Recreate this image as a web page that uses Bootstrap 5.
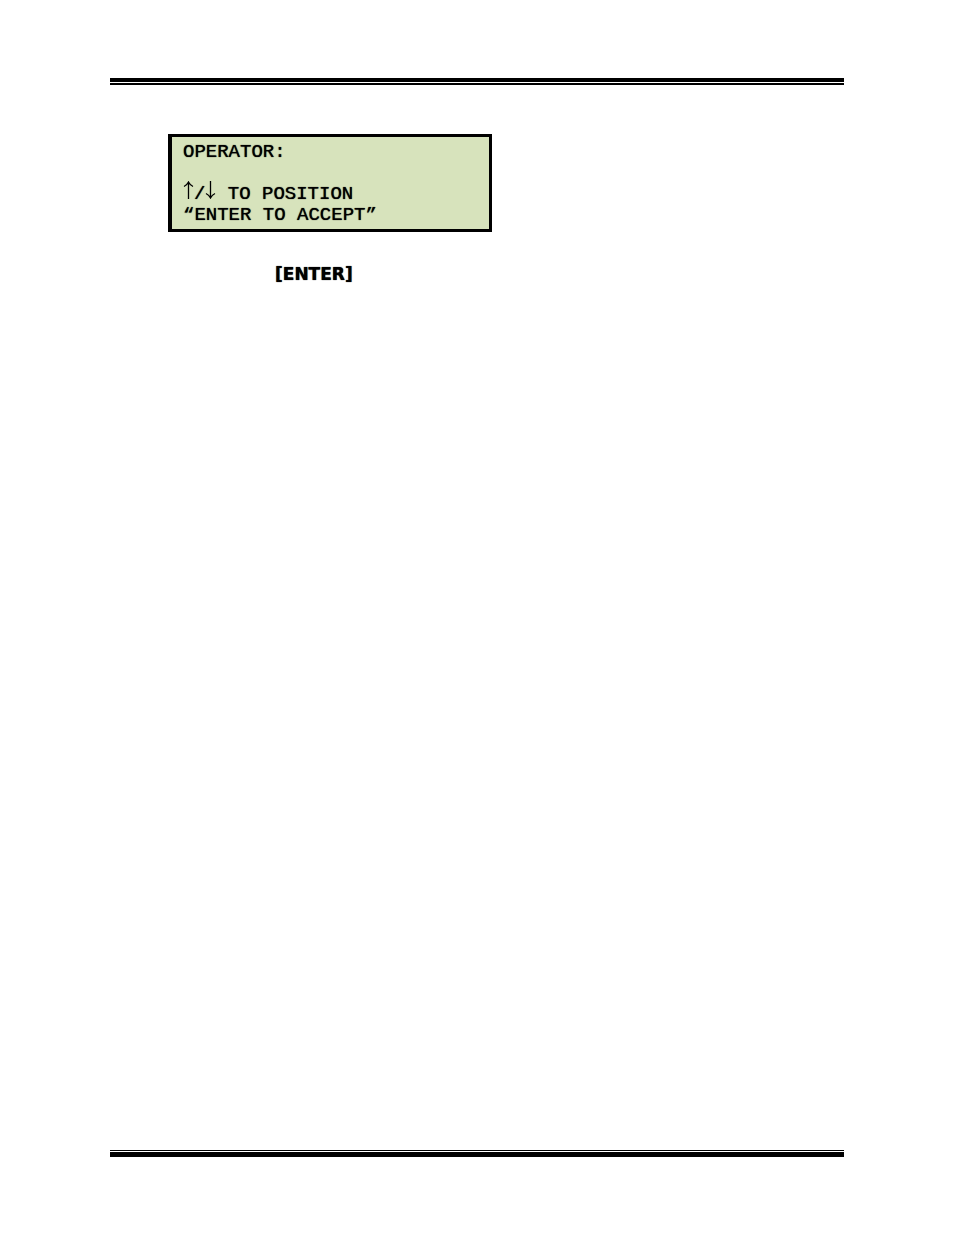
<!DOCTYPE html>
<html lang="en">
<head>
<meta charset="utf-8">
<meta name="viewport" content="width=device-width, initial-scale=1">
<title>Operator</title>
<link href="https://cdn.jsdelivr.net/npm/bootstrap@5.3.0/dist/css/bootstrap.min.css" rel="stylesheet">
<style>
body { background: #fff; color: #000; }
.sheet { padding: 78px 110px; }
.rule-top { height: 7px; border-top: 4px solid #000; border-bottom: 2px solid #000; }
.rule-bottom { height: 7px; border-top: 1px solid #000; border-bottom: 5px solid #000; }
.content { padding: 49px 58px; }
.lcd {
  width: 324px; max-width: 100%;
  padding: 5px 11px 3px;
  border: 3px solid #000; border-left-width: 4px;
  background: #d7e3bc;
  font: 19px/21px "Liberation Mono", monospace;
  text-shadow: 0 0 1px #000;
}
.lcd-line { height: 21px; white-space: pre; }
.arrow {
  width: 11px; height: 18px; margin-top: -4px;
  vertical-align: baseline;
  fill: none; stroke: #000; stroke-width: 1.3;
}
.key-row { padding: 32px 107px; font: bold 17px/21px "DejaVu Sans", sans-serif; text-shadow: 0 0 1px #000; }
</style>
</head>
<body>
<div class="sheet min-vh-100 d-flex flex-column">
  <header class="rule-top"></header>
  <main class="content flex-grow-1">
    <div class="lcd">
      <div class="lcd-line">OPERATOR:</div>
      <div class="lcd-line"></div>
      <div class="lcd-line"><svg class="arrow" viewBox="0 0 11 18" role="img" aria-label="Up"><path d="M5.500 18V1M1 5.500Q4 4 5.500 1Q7 4 10 5.500"/></svg>/<svg class="arrow" viewBox="0 0 11 18" role="img" aria-label="Down"><path d="M5.500 0V17M1 12.500Q4 14 5.500 17Q7 14 10 12.500"/></svg> TO POSITION</div>
      <div class="lcd-line">“ENTER TO ACCEPT”</div>
    </div>
    <p class="key-row mb-0">[ENTER]</p>
  </main>
  <footer class="rule-bottom"></footer>
</div>
<script src="https://cdn.jsdelivr.net/npm/bootstrap@5.3.0/dist/js/bootstrap.bundle.min.js"></script>
</body>
</html>
